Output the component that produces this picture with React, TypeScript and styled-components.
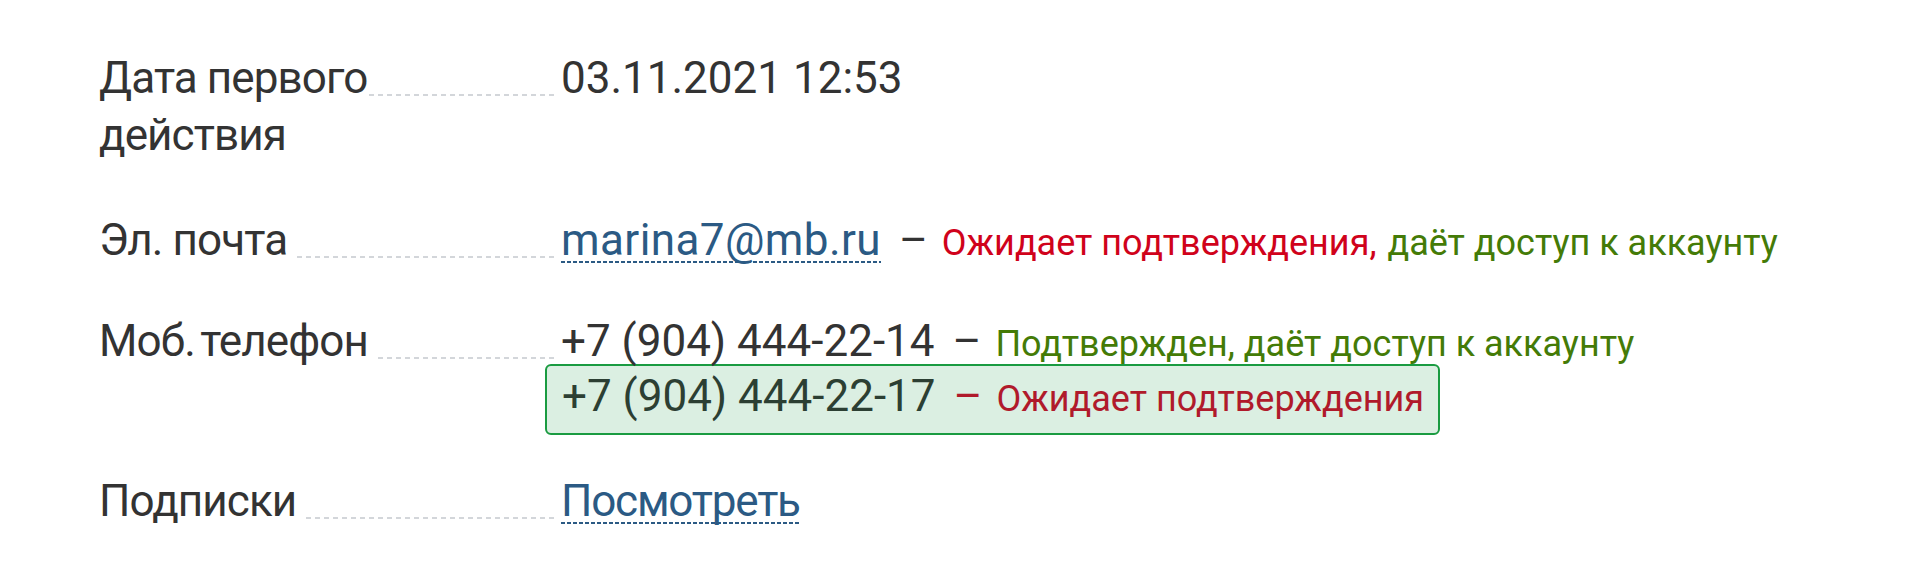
import React from 'react';
import styled, { createGlobalStyle } from 'styled-components';

const GlobalStyle = createGlobalStyle`
  body {
    margin: 0;
    background: #ffffff;
    font-family: Roboto, "Noto Sans", "Liberation Sans", sans-serif;
    color: #333333;
  }
`;

const Page = styled.div`
  padding: 50px 0 0 99px;
`;

const Row = styled.div<{ $space: number }>`
  display: grid;
  grid-template-columns: 462px auto;
  align-items: start;
  margin-bottom: ${({ $space }) => $space}px;
  font-size: 44px;
  line-height: 57px;
`;

const Label = styled.div`
  background-image: repeating-linear-gradient(
    to right,
    #d3d6da 0 5px,
    transparent 5px 9px
  );
  background-size: 100% 2px;
  background-position: 0 44px;
  background-repeat: no-repeat;
  margin-right: 3px;
  color: #333333;
`;

const LabelText = styled.span`
  background: #ffffff;
  padding-right: 6px;
  letter-spacing: -0.9px;
`;

const Value = styled.div`
  color: #333333;
`;

const Line = styled.div`
  white-space: nowrap;
`;

const DottedLink = styled.a<{ $tracking?: number }>`
  color: #2b5a84;
  text-decoration: none;
  cursor: pointer;
  letter-spacing: ${({ $tracking }) => $tracking ?? 0}px;
  background-image: repeating-linear-gradient(
    to right,
    #2b5a84 0 4px,
    transparent 4px 6px
  );
  background-size: 100% 2px;
  background-position: 0 calc(100% - 3px);
  background-repeat: no-repeat;
`;

const Dash = styled.span<{ $color?: string }>`
  display: inline-block;
  margin: 0 14px 0 18px;
  color: ${({ $color }) => $color || '#333333'};
`;

const Status = styled.span<{ $color: string }>`
  font-size: 36px;
  color: ${({ $color }) => $color};
`;

const PendingBox = styled.div`
  width: fit-content;
  margin: -9px 0 0 -16px;
  padding: 2px 14px 5px 15px;
  border: 2px solid #1a9b41;
  border-radius: 6px;
  background: #dbefe2;
  color: #2c3f33;
  white-space: nowrap;
`;

const RED = '#d0021b';
const GREEN = '#447b07';
const DARK_RED = '#b01a2b';

const App: React.FC = () => {
  return (
    <>
      <GlobalStyle />
      <Page>
        <Row $space={48}>
          <Label>
            <LabelText>Дата первого действия</LabelText>
          </Label>
          <Value>03.11.2021 12:53</Value>
        </Row>

        <Row $space={41}>
          <Label>
            <LabelText>Эл. почта</LabelText>
          </Label>
          <Value>
            <Line>
              <DottedLink $tracking={0.4}>marina7@mb.ru</DottedLink>
              <Dash>–</Dash>
              <Status $color={RED}>Ожидает подтверждения,</Status>{' '}
              <Status $color={GREEN}>даёт доступ к аккаунту</Status>
            </Line>
          </Value>
        </Row>

        <Row $space={38}>
          <Label>
            <LabelText>Моб.&#8239;телефон</LabelText>
          </Label>
          <Value>
            <Line>
              +7 (904) 444-22-14
              <Dash>–</Dash>
              <Status $color={GREEN}>Подтвержден, даёт доступ к аккаунту</Status>
            </Line>
            <PendingBox>
              +7 (904) 444-22-17
              <Dash $color={DARK_RED}>–</Dash>
              <Status $color={DARK_RED}>Ожидает подтверждения</Status>
            </PendingBox>
          </Value>
        </Row>

        <Row $space={0}>
          <Label>
            <LabelText>Подписки</LabelText>
          </Label>
          <Value>
            <DottedLink $tracking={-1.2}>Посмотреть</DottedLink>
          </Value>
        </Row>
      </Page>
    </>
  );
};

export default App;
